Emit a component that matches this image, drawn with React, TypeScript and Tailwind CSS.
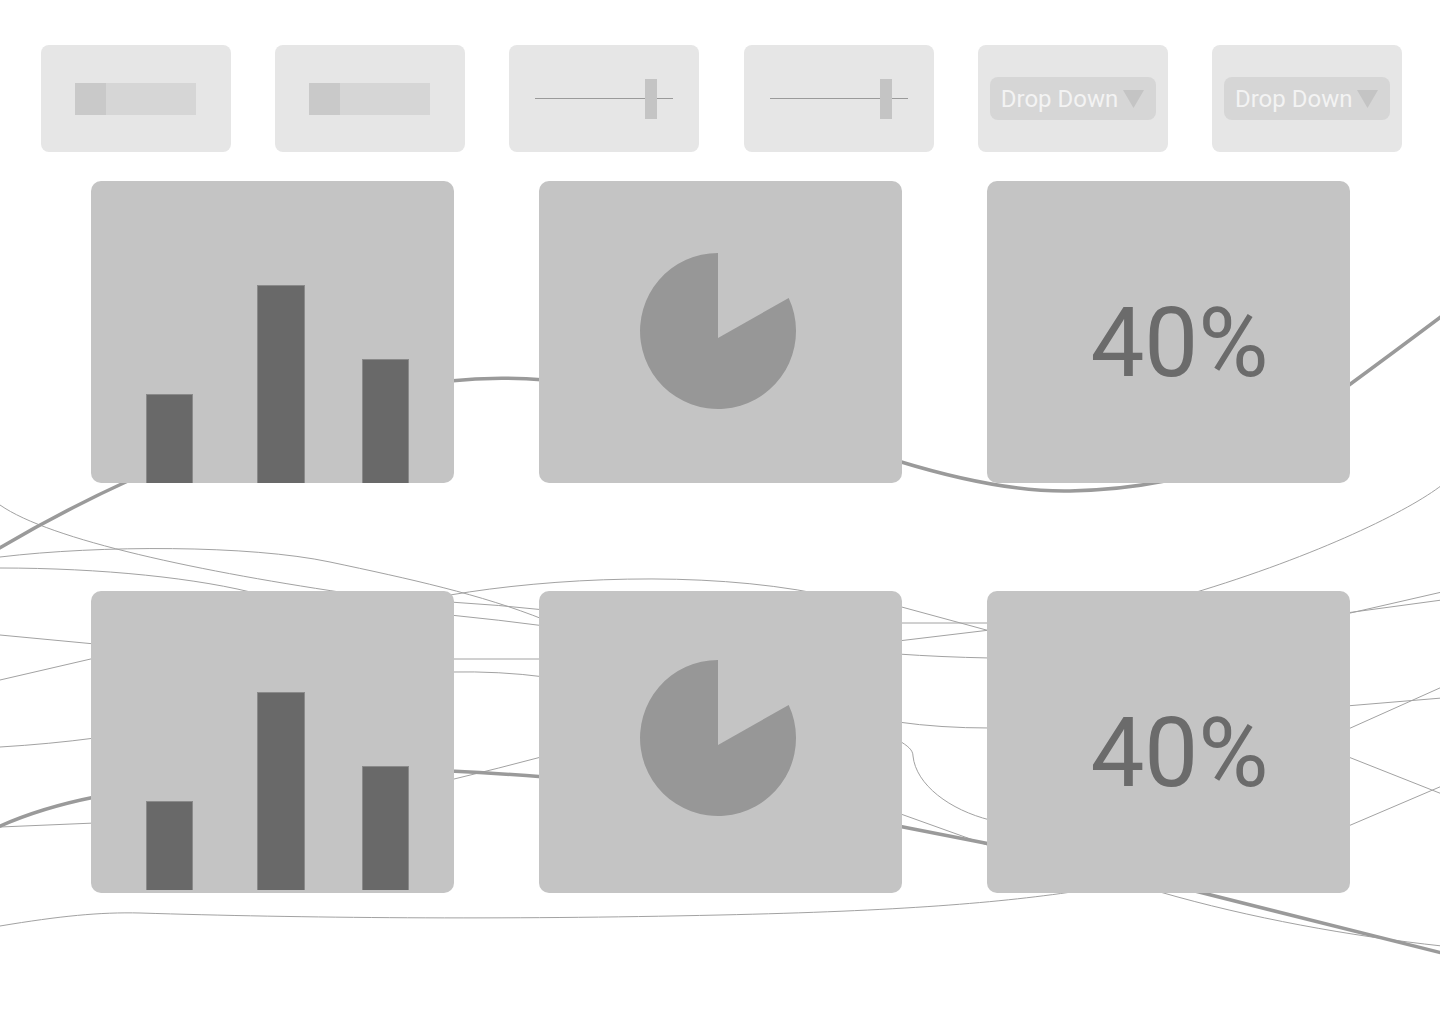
import React from "react";

const thin: string[] = [
  "M0,505 C 50,540 200,572 360,595",
  "M0,557 C 100,545 250,545 330,562 S 480,594 545,620",
  "M0,568 C 100,568 200,578 262,595",
  "M450,595 C 550,578 700,570 820,594",
  "M450,602 Q 500,605 545,610",
  "M450,615 Q 500,620 545,626",
  "M450,659 L545,659",
  "M450,672 Q 500,671 545,677",
  "M450,780 Q 500,768 545,756",
  "M0,635 L95,644",
  "M0,680 L95,658",
  "M0,747 Q 50,744 95,738",
  "M0,827 L95,823",
  "M0,926 C 60,916 100,912 140,913 C 300,918 500,920 720,915 C 900,911 1000,903 1085,890",
  "M898,606 L990,631",
  "M898,623 L990,623",
  "M898,641 L990,630",
  "M898,654 Q 940,657 990,658",
  "M898,722 Q 940,728 990,728",
  "M898,740 C 908,746 913,750 913,756 C 916,785 950,810 990,820",
  "M898,813 L990,846",
  "M1442,485 C 1410,510 1320,555 1190,594",
  "M1346,614 L1442,592",
  "M1346,613 L1442,600",
  "M1346,706 L1442,698",
  "M1346,730 L1442,687",
  "M1346,756 L1442,794",
  "M1346,827 L1442,786",
  "M1160,892 C 1250,918 1350,936 1442,946",
];

const thick: string[] = [
  "M-2,549 Q 60,512 130,480",
  "M450,381 Q 495,376 545,380",
  "M898,461 C 960,480 1020,492 1070,491 C 1110,490 1140,486 1165,481",
  "M1345,388 Q 1390,355 1442,316",
  "M-2,827 Q 40,808 95,797",
  "M450,771 Q 495,773 545,777",
  "M898,826 L990,844",
  "M1195,891 L1442,953",
];

function Lines() {
  return (
    <svg
      className="absolute left-0 top-0"
      width={1440}
      height={1024}
      viewBox="0 0 1440 1024"
      fill="none"
    >
      {thin.map((d, i) => (
        <path key={"t" + i} d={d} stroke="#a2a2a2" strokeWidth={1} fill="none" />
      ))}
      {thick.map((d, i) => (
        <path key={"k" + i} d={d} stroke="#9a9a9a" strokeWidth={3.5} fill="none" />
      ))}
    </svg>
  );
}

function ControlCard({ children, className = "justify-center" }: { children: React.ReactNode; className?: string }) {
  return (
    <div className={"w-[190px] h-[107px] rounded-[8px] bg-[#e6e6e6] flex items-center shrink-0 " + className}>
      {children}
    </div>
  );
}

function ToggleBar() {
  return (
    <div className="flex w-[121px] h-[32px] bg-[#d6d6d6]">
      <div className="w-[31px] h-full bg-[#c9c9c9]" />
    </div>
  );
}

function Slider() {
  return (
    <div className="relative w-[138px] h-[40px] flex items-center">
      <div className="w-full h-px bg-[#9a9a9a]" />
      <div className="absolute left-[110px] top-0 w-[12px] h-[40px] bg-[#c4c4c4]" />
    </div>
  );
}

function DropDown() {
  return (
    <div className="w-[166px] h-[43px] rounded-[8px] bg-[#d6d6d6] flex items-center pl-[11px] gap-[5px]">
      <span className="text-[24px] leading-none text-[#f3f3f3] font-[Roboto,sans-serif]">Drop Down</span>
      <svg width="21" height="18" viewBox="0 0 21 18">
        <path d="M0,0 L21,0 L10.5,18 Z" fill="#c4c4c4" />
      </svg>
    </div>
  );
}

function BarCard({ lift = false }: { lift?: boolean }) {
  return (
    <div
      className={
        "w-[363px] h-[302px] rounded-[10px] bg-[#c4c4c4] overflow-hidden flex items-end pl-[55px] " +
        (lift ? "pb-[3px]" : "pb-0")
      }
    >
      <div className="w-[47px] h-[89px] bg-[#696969] border border-b-0 border-[#8a8a8a]" />
      <div className="w-[48px] h-[198px] bg-[#696969] border border-b-0 border-[#8a8a8a] ml-[64px]" />
      <div className="w-[47px] h-[124px] bg-[#696969] border border-b-0 border-[#8a8a8a] ml-[57px]" />
    </div>
  );
}

function PieCard({ lift = false }: { lift?: boolean }) {
  return (
    <div className="w-[363px] h-[302px] rounded-[10px] bg-[#c4c4c4] overflow-hidden">
      <svg width="363" height="302" viewBox={lift ? "0 3 363 302" : "0 0 363 302"}>
        <path d="M179,157 L179,72 A78,78 0 1,0 249.7,117 Z" fill="#979797" />
      </svg>
    </div>
  );
}

function PercentCard() {
  return (
    <div className="w-[363px] h-[302px] rounded-[10px] bg-[#c4c4c4] flex items-center justify-center pl-[22px] pt-[22px]">
      <span className="text-[96px] leading-none text-[#6b6b6b] font-[Roboto,sans-serif]">40%</span>
    </div>
  );
}

export default function App() {
  return (
    <div className="relative w-[1440px] h-[1024px] bg-white overflow-hidden font-[Roboto,sans-serif]">
      <Lines />
      <div className="relative flex flex-col">
        <div className="flex gap-[44.2px] pl-[41px] pt-[45px]">
          <ControlCard className="justify-start pl-[34px]">
            <ToggleBar />
          </ControlCard>
          <ControlCard className="justify-start pl-[34px]">
            <ToggleBar />
          </ControlCard>
          <ControlCard>
            <Slider />
          </ControlCard>
          <ControlCard>
            <Slider />
          </ControlCard>
          <ControlCard>
            <DropDown />
          </ControlCard>
          <ControlCard>
            <DropDown />
          </ControlCard>
        </div>
        <div className="grid grid-cols-[363px_363px_363px] gap-x-[85px] gap-y-[108px] pl-[91px] mt-[29px]">
          <BarCard />
          <PieCard />
          <PercentCard />
          <BarCard lift />
          <PieCard lift />
          <PercentCard />
        </div>
      </div>
    </div>
  );
}
